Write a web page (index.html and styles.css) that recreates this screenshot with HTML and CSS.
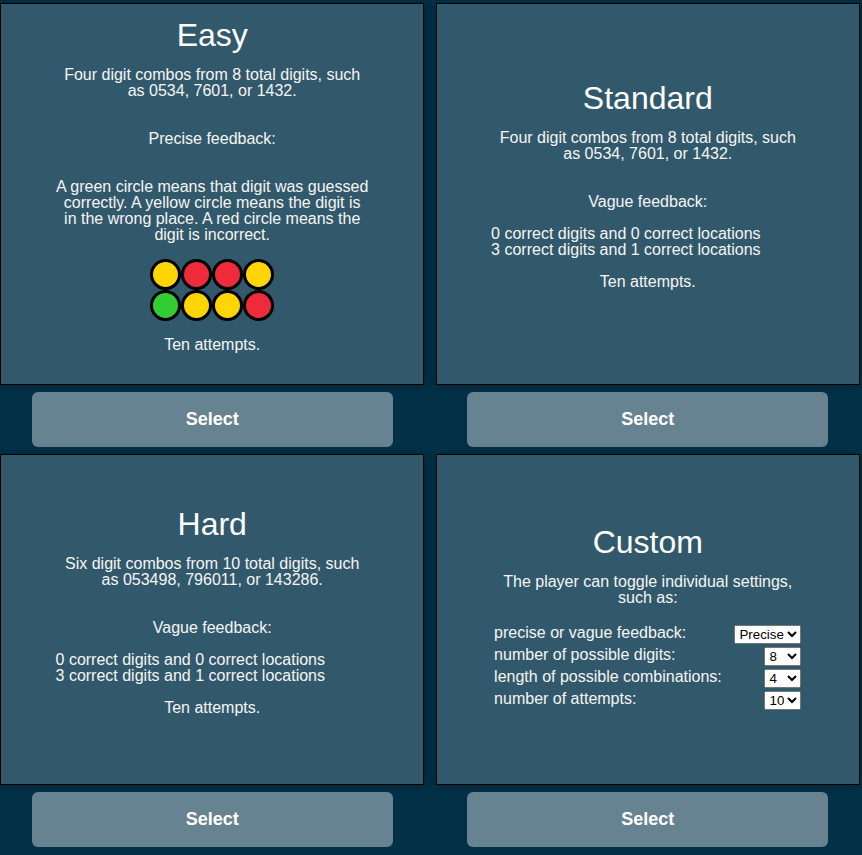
FILE: index.html
```html
<!DOCTYPE html>
<html lang="en">
<head>
<meta charset="utf-8">
<meta name="viewport" content="width=device-width, initial-scale=1">
<title>Choose a difficulty</title>
<link rel="stylesheet" href="styles.css">
</head>
<body>
<main class="modes">
  <section class="mode">
    <div class="card">
      <h2>Easy</h2>
      <p>Four digit combos from 8 total digits, such as 0534, 7601, or 1432.</p>
      <p class="spaced">Precise feedback:</p>
      <p class="spaced">A green circle means that digit was guessed correctly. A yellow circle means the digit is in the wrong place. A red circle means the digit is incorrect.</p>
      <div class="pegs">
        <span class="peg yellow"></span><span class="peg red"></span><span class="peg red"></span><span class="peg yellow"></span>
        <span class="peg green"></span><span class="peg yellow"></span><span class="peg yellow"></span><span class="peg red"></span>
      </div>
      <p>Ten attempts.</p>
    </div>
    <button class="select" type="button">Select</button>
  </section>

  <section class="mode">
    <div class="card">
      <h2>Standard</h2>
      <p>Four digit combos from 8 total digits, such as 0534, 7601, or 1432.</p>
      <p class="spaced">Vague feedback:</p>
      <p class="example">0 correct digits and 0 correct locations<br>3 correct digits and 1 correct locations</p>
      <p>Ten attempts.</p>
    </div>
    <button class="select" type="button">Select</button>
  </section>

  <section class="mode">
    <div class="card">
      <h2>Hard</h2>
      <p>Six digit combos from 10 total digits, such as 053498, 796011, or 143286.</p>
      <p class="spaced">Vague feedback:</p>
      <p class="example">0 correct digits and 0 correct locations<br>3 correct digits and 1 correct locations</p>
      <p>Ten attempts.</p>
    </div>
    <button class="select" type="button">Select</button>
  </section>

  <section class="mode">
    <div class="card">
      <h2>Custom</h2>
      <p>The player can toggle individual settings, such as:</p>
      <div class="settings">
        <div class="setting">
          <label for="feedback">precise or vague feedback:</label>
          <select id="feedback"><option>Precise</option><option>Vague</option></select>
        </div>
        <div class="setting">
          <label for="digits">number of possible digits:</label>
          <select id="digits"><option>6</option><option>7</option><option selected>8</option><option>9</option><option>10</option></select>
        </div>
        <div class="setting">
          <label for="length">length of possible combinations:</label>
          <select id="length"><option selected>4</option><option>5</option><option>6</option><option>8</option><option>10</option></select>
        </div>
        <div class="setting">
          <label for="attempts">number of attempts:</label>
          <select id="attempts"><option>5</option><option selected>10</option><option>15</option></select>
        </div>
      </div>
    </div>
    <button class="select" type="button">Select</button>
  </section>
</main>
</body>
</html>
```

FILE: styles.css
```css
* {
  box-sizing: border-box;
}

body {
  margin: 0;
  background: #023047;
  color: #f5f5f5;
  font: 16px/16px "Liberation Sans", Arial, sans-serif;
}

.modes {
  display: grid;
  grid-template-columns: 1fr 1fr;
  grid-template-rows: auto 1fr;
  gap: 7px 1.3%;
  min-height: 100vh;
  padding: 3px 2px 8px 0;
}

.mode {
  display: flex;
  flex-direction: column;
  align-items: center;
  gap: 7px;
}

.card {
  display: flex;
  flex: 1;
  flex-direction: column;
  align-items: center;
  justify-content: center;
  width: 100%;
  padding: 15px 12.85%;
  border: 1px solid #000;
  background: #32596b;
  box-shadow: 0 0 8px rgba(0, 0, 0, 0.3);
}

h2 {
  margin: 0 0 16px;
  color: #fff;
  font-size: 32px;
  font-weight: 400;
  line-height: 32px;
}

p {
  margin: 0 0 16px;
  text-align: center;
}

.spaced {
  margin-top: 16px;
}

.example {
  align-self: flex-start;
  text-align: left;
}

.pegs {
  display: grid;
  grid-template-columns: repeat(4, 31px);
  margin-bottom: 16px;
}

.peg {
  height: 31px;
  border: 3px solid #000;
  border-radius: 50%;
}

.yellow {
  background: #ffd500;
}

.red {
  background: #ef2b3b;
}

.green {
  background: #32cd32;
}

.settings {
  align-self: stretch;
  padding: 3px 3px 1px;
}

.setting {
  display: flex;
  align-items: flex-start;
  justify-content: space-between;
  height: 22px;
}

.setting select {
  margin: 0;
}

.select {
  width: 85%;
  height: 55px;
  padding: 0;
  border: 0;
  border-radius: 6px;
  background: #678290;
  color: #fff;
  font: bold 18px "Liberation Sans", Arial, sans-serif;
}
```
